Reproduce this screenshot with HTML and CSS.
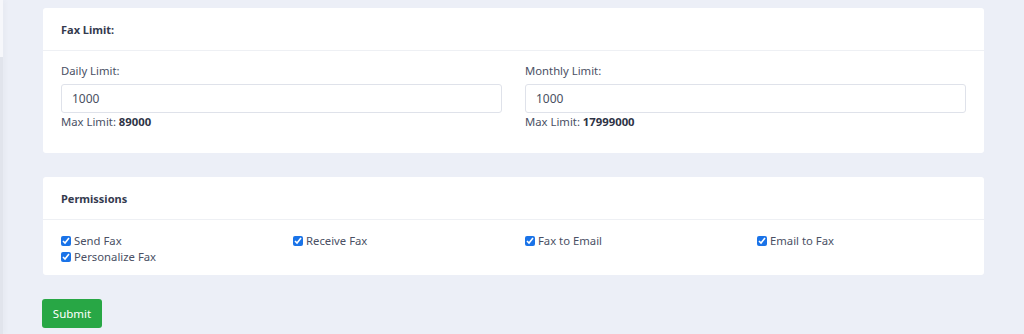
FILE: index.html
```html
<!DOCTYPE html>
<html lang="en">
<head>
    <meta charset="UTF-8">
    <meta name="viewport" content="width=device-width, initial-scale=1.0">
    <title>Fax Settings</title>
    <link rel="stylesheet" href="styles.css">
</head>
<body>
    <div class="side-edge"></div>
    <div class="content">
        <div class="card">
            <div class="card-header">Fax Limit:</div>
            <div class="card-body limits">
                <div class="field">
                    <label for="daily">Daily Limit:</label>
                    <input type="text" id="daily" class="form-control" value="1000">
                    <div class="hint">Max Limit: <strong>89000</strong></div>
                </div>
                <div class="field">
                    <label for="monthly">Monthly Limit:</label>
                    <input type="text" id="monthly" class="form-control" value="1000">
                    <div class="hint">Max Limit: <strong>17999000</strong></div>
                </div>
            </div>
        </div>

        <div class="card">
            <div class="card-header">Permissions</div>
            <div class="card-body perms">
                <label class="check"><input type="checkbox" checked> Send Fax</label>
                <label class="check"><input type="checkbox" checked> Receive Fax</label>
                <label class="check"><input type="checkbox" checked> Fax to Email</label>
                <label class="check"><input type="checkbox" checked> Email to Fax</label>
                <label class="check"><input type="checkbox" checked> Personalize Fax</label>
            </div>
        </div>

        <button class="btn-submit">Submit</button>
    </div>
</body>
</html>
```

FILE: styles.css
```css
html, body {
    height: 100%;
}
body {
    margin: 0;
    font-family: "Noto Sans", "Open Sans", sans-serif;
    font-size: 11.3px;
    color: #4a5064;
    background-color: #eceff7;
    display: flex;
}
.side-edge {
    width: 3px;
    background: linear-gradient(to bottom, #f6f7fb 0, #f6f7fb 57px, #e1e4ec 57px);
    box-shadow: 2px 0 5px rgba(0,0,0,0.04);
}
.content {
    flex: 1;
    padding: 8px 40px 0 40px;
}
.card {
    background: white;
    border-radius: 3px;
    margin-bottom: 24px;
}
.card-header {
    height: 42px;
    line-height: 43px;
    padding: 0 18px;
    font-weight: bold;
    font-size: 11px;
    color: #343a4e;
    border-bottom: 1px solid #eef0f4;
}
.card-body {
    padding: 10px 18px 12px;
}
.limits {
    display: grid;
    grid-template-columns: 1fr 1fr;
    column-gap: 23px;
    padding-top: 11px;
    padding-bottom: 23px;
}
.field label {
    display: block;
    line-height: 17px;
    margin-bottom: 5px;
}
.form-control {
    box-sizing: border-box;
    width: 100%;
    height: 29px;
    padding: 0 10px;
    border: 1px solid #dfe2ea;
    border-radius: 3px;
    font-family: inherit;
    font-size: 12px;
    color: #4a5062;
}
.hint {
    margin-top: 1px;
    line-height: 16px;
}
.hint strong {
    color: #2e3346;
}
.perms {
    display: grid;
    grid-template-columns: repeat(4, 1fr);
    column-gap: 23px;
    padding-top: 13px;
    padding-bottom: 10px;
}
.check {
    display: flex;
    align-items: center;
    line-height: 16px;
}
.check input {
    width: 10px;
    height: 10px;
    margin: 0 3px 0 0;
    accent-color: #1a73e8;
}
.btn-submit {
    background: #28a745;
    color: white;
    border: none;
    border-radius: 3px;
    height: 29px;
    width: 60px;
    padding: 0;
    margin-left: -1px;
    font-family: inherit;
    font-size: 11.5px;
    cursor: pointer;
}
```
